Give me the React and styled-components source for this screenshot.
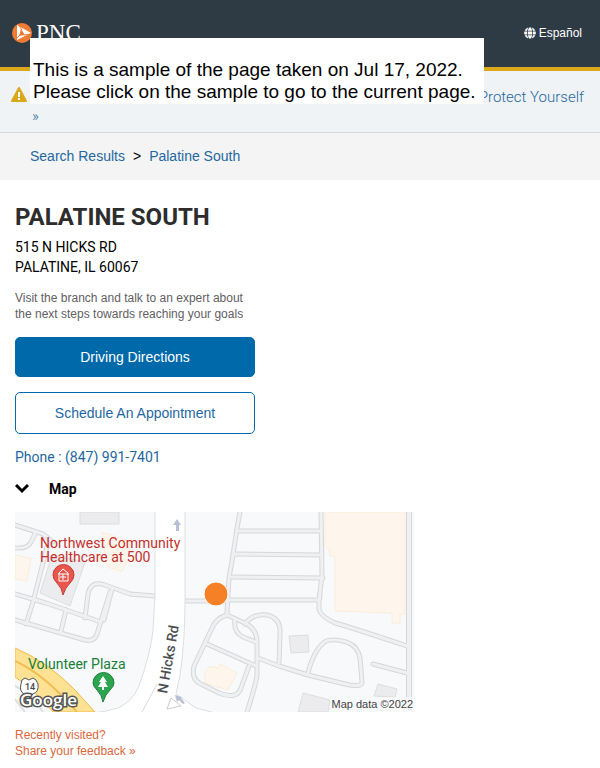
import React from 'react'
import styled, { createGlobalStyle } from 'styled-components'
import { FaGlobe } from 'react-icons/fa'

const roads = [
    'M225 0 L222 16 L218 43 L214 66 L212 100 L212 103',
    'M222 19 H306',
    'M218 42 L307 43',
    'M215 65 L308 66',
    'M212 88 L303 88 Q305 88 305 82',
    'M306 0 L307 63 L304 88 L304 97 Q305 104 320 111 Q332 114 392 134',
    'M212 103 Q202 106 198 114 L179 154 Q176 168 186 172 L204 181 Q222 188 226 176 L234 154',
    'M212 103 L232 112 Q242 118 242 130 V163 Q241 172 232 200',
    'M192 132 L241 154',
    'M220 107 Q218 120 228 125 L241 130',
    'M230 112 Q238 101 252 103 Q266 106 265 122 L264 151',
    'M243 146 L264 154 L293 163 L330 172 Q347 176 347 170 L345 146 Q343 135 334 131 Q320 126 311 129 Q299 137 293 161',
    'M358 152 L392 161',
    'M0 13 L28 22 L38 30',
    'M0 36 Q13 37 16 30 L20 22',
    'M32 35 L18 90 L11 112',
    'M0 82 L31 91 L86 110',
    'M0 108 L70 128 Q79 130 82 122 L95 80',
    'M51 98 L46 119',
    'M70 106 L73 82 Q76 68 90 73 L115 82 L140 84',
    'M97 77 L89 108',
    'M170 89 H212',
]

const greyBlocks = [
    '65,0 104,0 104,12 65,12',
    '37,43 70,50 55,94 25,81',
    '274,124 293,123 294,140 276,141',
    '288,181 315,188 313,200 283,200',
    '363,172 382,177 380,185 359,184',
]

const creamBlocks = [
    '0,43 16,46 12,69 0,67',
    '87,20 115,30 113,48 107,59 92,55',
    '190,160 195,154 203,156 205,152 222,161 213,178 190,171',
    '310,0 390,0 390,102 385,102 385,111 377,111 377,101 320,99 320,45 315,44 315,38 310,34',
]

const PncLogo = () => (
    <svg width="22" height="22" viewBox="0 0 22 22" aria-hidden="true">
        <circle cx="11" cy="11" r="10" fill="#ee7c35" />
        <path d="M6 3 L20 11 L6 18 Z" fill="#fff" />
        <path d="M10 7 L14 13 L8 14 Z" fill="#ee7c35" />
        <path d="M7 2 L11 8 M20 12 L13 13 M4 18 L9 13" stroke="#ee7c35" strokeWidth="1" />
    </svg>
)

const WarningIcon = () => (
    <svg width="16" height="16" viewBox="0 0 16 16" aria-hidden="true">
        <path d="M8 1 L15 14 H1 Z" fill="#dba81c" stroke="#dba81c" strokeWidth="2" strokeLinejoin="round" />
        <path d="M8 5 V10 M8 11 V13" stroke="#fff" strokeWidth="2" />
    </svg>
)

const BranchMap = () => (
    <MapDrawing viewBox="0 0 400 200" role="img" aria-label="Map of Palatine South">
        <rect width="400" height="200" fill="#f8f9fb" />
        {greyBlocks.map((points) => (
            <polygon key={points} points={points} fill="#ececee" stroke="#dddee0" />
        ))}
        {creamBlocks.map((points) => (
            <polygon key={points} points={points} fill="#fef6ec" stroke="#fbecd8" />
        ))}
        <g fill="none" stroke="#d5d7da" strokeWidth="5" strokeLinecap="round" strokeLinejoin="round">
            {roads.map((d) => <path key={d} d={d} />)}
            <path d="M394 -4 V204" strokeWidth="6" />
        </g>
        <g fill="none" stroke="#eff0f2" strokeWidth="3" strokeLinecap="round" strokeLinejoin="round">
            {roads.map((d) => <path key={d} d={d} />)}
            <path d="M394 -4 V204" strokeWidth="4" />
        </g>
        <rect x="399" width="1" height="200" fill="#fafafa" />

        <path
            d="M140 -1 V84 L138 118 Q136 140 124 174 Q117 190 103 196 Q91 200 76 201 H200 L181 196 L161 182 L165 163 Q170 130 170 89 V-1 Z"
            fill="#fff"
            stroke="#dcdfe2"
        />
        <path d="M142 172 L127 200" stroke="#d9dbde" />
        <g fill="#b9c0d4">
            <path d="M162 7 L166 13 H164 V19 H161 V13 H158 Z" />
            <path d="M160 183 L167 185 L166 186 L170 191 L168 192 L164 188 L162 190 Z" />
        </g>
        <path d="M156 186 L166 194 L152 197 Z" fill="#fff" stroke="#c9ccd2" />

        <path d="M0 136 Q33 150 60 178 L80 200 H38 Q20 178 0 165 Z" fill="#fde293" stroke="#f1bb4d" />
        <path d="M0 149 Q30 163 62 200" fill="none" stroke="#f2bd53" strokeWidth="2" />
        <path d="M0 174 Q17 182 28 200 M0 187 L10 200" fill="none" stroke="#dcdee1" strokeWidth="2" />

        <MapLabel fill="#c5302b">
            <text x="25" y="36">Northwest Community</text>
            <text x="25" y="50">Healthcare at 500</text>
        </MapLabel>
        <MapLabel fill="#188038">
            <text x="13" y="157">Volunteer Plaza</text>
        </MapLabel>
        <RoadLabel transform="translate(152 182) rotate(-80)">N Hicks Rd</RoadLabel>

        <path d="M48 83 Q47 76 42 71 Q38 67 38 63 A10 10 0 0 1 59 63 Q59 67 55 71 Q50 76 48 83 Z" fill="#e8564d" stroke="#c43c34" />
        <path d="M43 62 H54 M48 57 L53 61 V69 H44 V61 Z" fill="none" stroke="#fff" />
        <path d="M48 62 V68 M45 65 H51" stroke="#fff" />

        <path d="M88 190 Q87 183 82 178 Q78 174 78 171 A10 10 0 0 1 99 171 Q99 174 95 178 Q90 183 88 190 Z" fill="#2da44f" stroke="#188038" />
        <path d="M88 164 L92 170 H90 L93 175 H89 V178 H87 V175 H83 L86 170 H84 Z" fill="#fff" />

        <path d="M7 168 L10 166 L14 168 L18 166 L21 168 L23 172 Q24 180 18 182 L14 184 L9 182 Q4 179 6 172 Z" fill="#fff" stroke="#555" />
        <ShieldText x="10" y="178">14</ShieldText>
        <GoogleText x="5" y="194">Google</GoogleText>

        <circle cx="201" cy="82" r="12" fill="#f58025" stroke="#fff" strokeWidth="1" />
        <rect x="316" y="185" width="84" height="15" fill="#f8f9fb" fillOpacity="0.8" />
        <CreditText x="398" y="196">Map data ©2022</CreditText>
    </MapDrawing>
)

const App = () => {
    return (
        <>
            <GlobalStyle />
            <StHeader>
                <StBrand href="#home">
                    <PncLogo />
                    <span>PNC</span>
                </StBrand>
                <StLanguage href="#espanol">
                    <FaGlobe size={12} />
                    Español
                </StLanguage>
                <StNotice href="#current">
                    This is a sample of the page taken on Jul 17, 2022.<br />
                    Please click on the sample to go to the current page.
                </StNotice>
            </StHeader>
            <StAlert>
                <WarningIcon />
                <StAlertLink href="#protect">
                    <span>Protect Yourself</span>
                    <span>»</span>
                </StAlertLink>
            </StAlert>
            <StBreadcrumb aria-label="Breadcrumb">
                <a href="#results">Search Results</a>
                <span>&gt;</span>
                <a href="#branch">Palatine South</a>
            </StBreadcrumb>
            <StMain>
                <StTitle>PALATINE SOUTH</StTitle>
                <StAddress>
                    515 N HICKS RD<br />
                    PALATINE, IL 60067
                </StAddress>
                <StIntro>Visit the branch and talk to an expert about the next steps towards reaching your goals</StIntro>
                <StActions>
                    <StButton $primary>Driving Directions</StButton>
                    <StButton>Schedule An Appointment</StButton>
                </StActions>
                <StPhone href="tel:8479917401">Phone : (847) 991-7401</StPhone>
                <StMapToggle aria-expanded="true">
                    <svg width="14" height="10" viewBox="0 0 14 10" aria-hidden="true">
                        <path d="M1 1 L7 7 L13 1" fill="none" stroke="#000" strokeWidth="3" />
                    </svg>
                    Map
                </StMapToggle>
                <BranchMap />
                <StFeedback href="#feedback">
                    Recently visited?<br />
                    Share your feedback »
                </StFeedback>
            </StMain>
        </>
    )
}

export default App

const GlobalStyle = createGlobalStyle`
    * {
        box-sizing: border-box;
    }
    body {
        margin: 0;
        background-color: #fff;
        font-family: "Liberation Sans", Arial, sans-serif;
        color: #000;
    }
    a {
        color: #1f679f;
        text-decoration: none;
    }
    button {
        font-family: inherit;
        cursor: pointer;
    }
`;

const StHeader = styled.header`
    position: relative;
    display: flex;
    justify-content: space-between;
    align-items: center;
    height: 71px;
    padding: 0 18px 2px 11px;
    background-color: #2e3a44;
    border-bottom: 4px solid #dba81c;
`;

const StBrand = styled.a`
    display: flex;
    align-items: center;
    gap: 3px;
    color: #fff;
    font-family: "Liberation Serif", "Times New Roman", serif;
    font-size: 23px;
    line-height: 22px;
`;

const StLanguage = styled.a`
    display: flex;
    align-items: center;
    gap: 3px;
    color: #fff;
    font-size: 12px;
    line-height: 16px;
`;

const StNotice = styled.a`
    position: absolute;
    top: 38px;
    left: 30px;
    z-index: 1;
    padding: 21px 8px 1px 3px;
    background-color: #fff;
    color: #000;
    font-size: 19px;
    line-height: 22px;
    white-space: nowrap;
`;

const StAlert = styled.section`
    display: flex;
    gap: 5px;
    padding: 16px 16px 6px 11px;
    background-color: #eff3f6;
    border-bottom: 1px solid #d3d8dc;
    & > svg {
        flex: none;
    }
`;

const StAlertLink = styled.a`
    display: flex;
    flex-direction: column;
    flex: 1;
    padding-top: 1px;
    font-family: Roboto, sans-serif;
    font-size: 15px;
    font-weight: 300;
    line-height: 19px;
    & > span:first-child {
        text-align: right;
    }
`;

const StBreadcrumb = styled.nav`
    display: flex;
    gap: 8px;
    padding: 14px 30px;
    background-color: #f4f4f4;
    font-size: 14px;
    line-height: 19px;
`;

const StMain = styled.main`
    display: flex;
    flex-direction: column;
    align-items: flex-start;
    padding: 22px 15px 8px;
`;

const StTitle = styled.h1`
    margin: 0;
    color: #2d2d2d;
    font-family: Roboto, sans-serif;
    font-size: 24px;
    font-weight: 700;
    line-height: 30px;
`;

const StAddress = styled.address`
    margin-top: 5px;
    font-family: Roboto, sans-serif;
    font-size: 14px;
    font-style: normal;
    line-height: 20px;
`;

const StIntro = styled.p`
    max-width: 240px;
    margin: 13px 0 0;
    color: #5f6062;
    font-size: 12px;
    line-height: 16px;
`;

const StActions = styled.div`
    display: flex;
    flex-direction: column;
    gap: 15px;
    width: 240px;
    max-width: 100%;
    margin-top: 15px;
`;

const StButton = styled.button`
    padding: ${({ $primary }) => ($primary ? '11px' : '12px')} 8px;
    border: 1px solid #0069aa;
    border-radius: 5px;
    background-color: ${({ $primary }) => ($primary ? '#0069aa' : '#fff')};
    color: ${({ $primary }) => ($primary ? '#fff' : '#1f679f')};
    font-size: 14px;
    line-height: 16px;
`;

const StPhone = styled.a`
    margin-top: 13px;
    font-family: Roboto, sans-serif;
    font-size: 14px;
    line-height: 20px;
`;

const StMapToggle = styled.button`
    display: flex;
    align-items: center;
    gap: 20px;
    margin-top: 12px;
    padding: 0;
    border: none;
    background: none;
    color: #000;
    && {
        font-family: Roboto, sans-serif;
    }
    font-size: 14px;
    font-weight: 700;
    line-height: 20px;
`;

const MapDrawing = styled.svg`
    width: 100%;
    max-width: 400px;
    margin-top: 13px;
`;

const MapLabel = styled.g`
    font-family: Roboto, sans-serif;
    font-size: 14px;
`;

const RoadLabel = styled.text`
    font-family: Roboto, sans-serif;
    font-size: 14px;
    font-weight: 500;
    fill: #4d4f53;
`;

const ShieldText = styled.text`
    font-family: Roboto, sans-serif;
    font-size: 9px;
    font-weight: 500;
    fill: #444;
`;

const GoogleText = styled.text`
    font-family: "Open Sans", sans-serif;
    font-size: 17px;
    font-weight: 600;
    fill: #fff;
    paint-order: stroke;
    stroke: #555;
    stroke-width: 3px;
`;

const CreditText = styled.text`
    font-family: "Liberation Sans", Arial, sans-serif;
    font-size: 11px;
    fill: #444;
    text-anchor: end;
`;

const StFeedback = styled.a`
    margin-top: 15px;
    color: #d9693c;
    font-size: 12px;
    line-height: 16px;
`;
